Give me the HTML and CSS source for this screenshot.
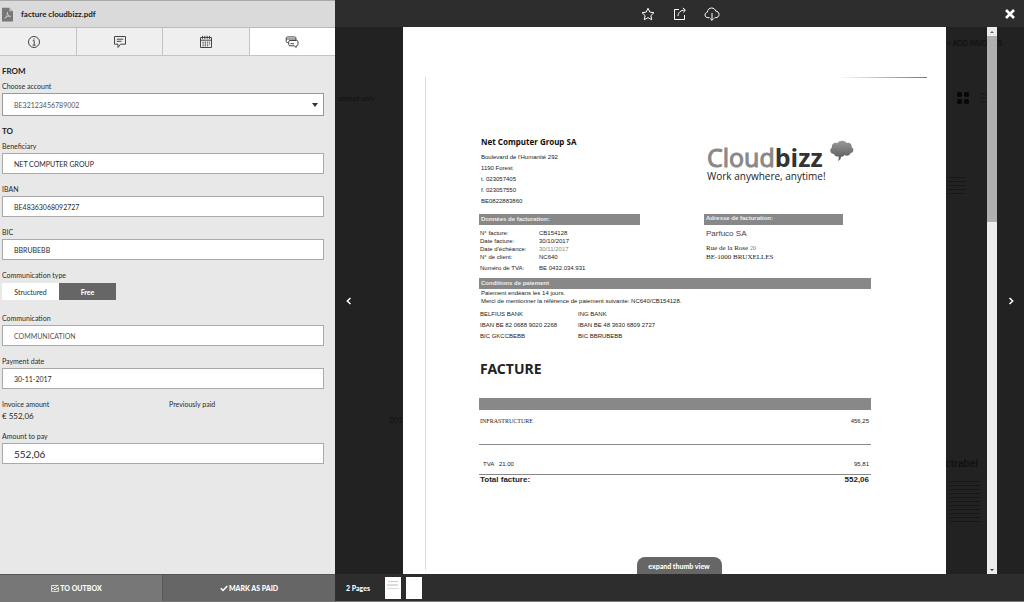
FILE: index.html
```html
<!DOCTYPE html>
<html lang="en">
<head>
<meta charset="utf-8">
<title>facture cloudbizz.pdf</title>
<link rel="stylesheet" href="styles.css">
</head>
<body>
<div class="app">
  <aside class="panel">
    <header class="panel-head">
      <svg class="pdf-icon" viewBox="0 0 12 15" aria-hidden="true"><path fill="#777" d="M0 0h8l4 4v11H0z"/><path fill="#bbb" d="M8 0l4 4H8z"/><path fill="none" stroke="#d8d8d8" stroke-width=".8" d="M3 11.500c2-1 3.200-3.500 3-6.500-.9 2 1.500 5 3.500 4.500C7.500 9 5 9.700 3 11.500z"/></svg>
      <h1>facture cloudbizz.pdf</h1>
    </header>
    <nav class="tabs">
      <button type="button" aria-label="Info"><svg viewBox="0 0 14 14"><circle cx="7" cy="7" r="5.500"/><path d="M5.800 5.700h1.400V10M5.600 10.200h3M7 3.500v1.200"/></svg></button>
      <button type="button" aria-label="Comments"><svg viewBox="0 0 14 14"><path d="M1.500 1.500h11v7.700H7.500L5 12.500V9.200H1.500zM3.800 4.200h6.500M3.800 6.300h4.700"/></svg></button>
      <button type="button" aria-label="Calendar"><svg viewBox="0 0 14 14"><path d="M1.500 2.500h11v10h-11zM1.500 5.200h11M3.500.8v3M5.800.8v3M8.200.8v3M10.500.8v3"/><path stroke-dasharray="1.300 .9" d="M3.500 7.200h7.500M3.500 9h7.500M3.500 10.800h6"/></svg></button>
      <button type="button" class="active" aria-label="Payment"><svg viewBox="0 0 14 14"><path d="M3.500 7.500H2.500c-.8 0-1.300-.5-1.300-1.300V3.200c0-.8.500-1.300 1.300-1.300h7.200c.8 0 1.300.5 1.300 1.300V5M1.200 4H11"/><path d="M5 5.500h6.700c.8 0 1.300.5 1.300 1.300v2.700c0 .8-.5 1.300-1.300 1.300h-.5v1.700l-2-1.700H5c-.8 0-1.300-.5-1.300-1.300V6.800c0-.8.500-1.300 1.300-1.300zM5.500 8.700h3.500"/></svg></button>
    </nav>
    <form class="form" id="payment">
      <section class="group">
        <h2>FROM</h2>
        <div class="field">
          <label for="account">Choose account</label>
          <span class="select">
            <select id="account"><option>BE32123456789002</option></select>
          </span>
        </div>
      </section>
      <section class="group">
        <h2>TO</h2>
        <div class="field"><label for="beneficiary">Beneficiary</label><input id="beneficiary" type="text" value="NET COMPUTER GROUP"></div>
      </section>
      <div class="field"><label for="iban">IBAN</label><input id="iban" type="text" value="BE48363068092727"></div>
      <div class="field"><label for="bic">BIC</label><input id="bic" type="text" value="BBRUBEBB"></div>
      <div class="field">
        <span class="label">Communication type</span>
        <div class="toggle"><button type="button">Structured</button><button type="button" class="on">Free</button></div>
      </div>
      <div class="field"><label for="communication">Communication</label><input id="communication" type="text" placeholder="COMMUNICATION"></div>
      <div class="field"><label for="date">Payment date</label><input id="date" type="text" value="30-11-2017"></div>
      <dl class="amounts">
        <div><dt>Invoice amount</dt><dd>€ 552,06</dd></div>
        <div><dt>Previously paid</dt></div>
      </dl>
      <div class="field"><label for="pay">Amount to pay</label><input id="pay" class="big" type="text" value="552,06"></div>
    </form>
    <footer class="actions">
      <button type="button"><svg viewBox="0 0 8 8"><path fill="none" stroke="#fff" stroke-width=".8" d="M7.400 3v4.400H.6V1.500h6.800M.6 4.500h1.800l.6 1h2l.6-1h1.800M2.600 2.700l1.300 1.200 2.900-2.600"/></svg>TO OUTBOX</button>
      <button type="button"><svg viewBox="0 0 8 8"><path fill="none" stroke="#fff" stroke-width="1.500" d="M.8 4.200l2.200 2.200 4.300-4.500"/></svg>MARK AS PAID</button>
    </footer>
  </aside>

  <main class="viewer">
    <header class="toolbar">
      <button type="button" aria-label="Favourite"><svg viewBox="0 0 16 16"><path d="M8 2.300l1.800 3.800 4.100.6-3 2.900.8 4.100L8 11.700l-3.700 2 .8-4.100-3-2.900 4.100-.6z"/></svg></button>
      <button type="button" aria-label="Share"><svg viewBox="0 0 16 16"><path d="M7 3.500H2.500v10h10V9M6 10c.3-3.500 2.500-5.700 7-6M10.800 2l2.500 1.900-1.800 2.600"/></svg></button>
      <button type="button" aria-label="Download"><svg viewBox="0 0 16 16"><path d="M5.500 11.700H4C2.200 11.700 1 10.400 1 8.900c0-1.400 1-2.400 2.400-2.700C3.400 3.700 5.200 2 7.600 2c2 0 3.600 1.200 4.100 3.100 1.900.1 3.300 1.500 3.300 3.300 0 1.900-1.300 3.300-3.200 3.300h-1.300M8 7v7.300M6.200 12.500L8 14.300l1.800-1.800"/></svg></button>
      <button type="button" class="close" aria-label="Close"><svg viewBox="0 0 12 12"><path stroke-width="2.600" d="M2 2l8 8M10 2l-8 8"/></svg></button>
    </header>

    <div class="stage">
      <div class="backdrop" aria-hidden="true">
        <span class="ghost filter">unread only</span>
        <span class="ghost add">+ ADD INVOICES</span>
        <svg class="ghost-grid" viewBox="0 0 32 12"><path fill="#080808" d="M1 0h3l1 1v3l-1 1H1L0 4V1zM8 0h3l1 1v3l-1 1H8L7 4V1zM1 7h3l1 1v3l-1 1H1l-1-1V8zM8 7h3l1 1v3l-1 1H8l-1-1V8z"/><path stroke="#111" stroke-dasharray="1.500 1" d="M23 2h7M23 6h7M23 10h7"/></svg>
        <span class="ghost year">201</span>
        <span class="ghost brand">ctrabel</span>
        <span class="ghost-lines upper"></span>
        <span class="ghost-lines lower"></span>
      </div>
      <button type="button" class="step" aria-label="Previous"><svg viewBox="0 0 8 8"><path d="M5.500 1L2.300 4l3.200 3"/></svg></button>

      <article class="page">
        <div class="doc-top">
          <section class="sender">
            <h2>Net Computer Group SA</h2>
            <address>Boulevard de l'Humanité 292<br>1190 Forest<br>t. 023057405<br>f. 023057550<br>BE0822883860</address>
            <h3 class="bar">Données de facturation:</h3>
            <table class="facts">
              <tr><th>N° facture:</th><td>CB154128</td></tr>
              <tr><th>Date facture:</th><td>30/10/2017</td></tr>
              <tr><th>Date d'échéance:</th><td class="faint">30/11/2017</td></tr>
              <tr><th>N° de client:</th><td>NC640</td></tr>
              <tr class="tall"><th>Numéro de TVA:</th><td>BE 0432.034.931</td></tr>
            </table>
          </section>
          <section class="recipient">
            <div class="logo">
              <div><p class="logo-name">Cloud<b>bizz</b></p><p class="logo-tag">Work anywhere, anytime!</p></div>
              <svg viewBox="0 0 26 22"><defs><linearGradient id="cloud" x1="0" y1="0" x2="0" y2="1"><stop offset="0" stop-color="#999"/><stop offset="1" stop-color="#555"/></linearGradient></defs><path fill="url(#cloud)" d="M5 14C1 14 0 9 3 7.500 2 4 6 2 8.500 3.200 10 0 16 0 17.500 3c3-1 6 1.500 5 4.300 3 1.200 2.200 5.700-1 5.700-.5 2.700-4 3.500-6 2-.8 1.500-2.500 2-3.500 1.700.2 1.800-1 3.500-3 4.300.8-1.500 1-3 .5-4.500C7.500 16.600 5.500 16 5 14z"/></svg>
            </div>
            <h3 class="bar">Adresse de facturation:</h3>
            <p class="client">Parfuco SA</p>
            <p class="street">Rue de la Rose <small>20</small><br>BE-1000 BRUXELLES</p>
          </section>
        </div>
        <section class="terms">
          <h3 class="bar">Conditions de paiement</h3>
          <p>Paiement endéans les 14 jours.<br>Merci de mentionner la référence de paiement suivante: NC640/CB154128.</p>
          <div class="banks">
            <p>BELFIUS BANK<br>IBAN BE 82 0688 9020 2268<br>BIC GKCCBEBB</p>
            <p>ING BANK<br>IBAN BE 48 3630 6809 2727<br>BIC BBRUBEBB</p>
          </div>
        </section>
        <h2 class="title">FACTURE</h2>
        <table class="lines">
          <thead><tr><td colspan="2"></td></tr></thead>
          <tbody>
            <tr class="item"><th>INFRASTRUCTURE</th><td>456,25</td></tr>
            <tr class="tax"><th>TVA &nbsp; 21.00</th><td>95,81</td></tr>
            <tr class="total"><th>Total facture:</th><td>552,06</td></tr>
          </tbody>
        </table>
        <button type="button" class="expand">expand thumb view</button>
      </article>

      <div class="scrollbar" aria-hidden="true"><i class="up"></i><i class="thumb"></i><i class="down"></i></div>
      <button type="button" class="step" aria-label="Next"><svg viewBox="0 0 8 8"><path d="M2.500 1l3.200 3-3.200 3"/></svg></button>
    </div>

    <footer class="thumbs">
      <span>2 Pages</span>
      <button type="button" class="mini printed" aria-label="Page 1"></button>
      <button type="button" class="mini" aria-label="Page 2"></button>
    </footer>
  </main>
</div>
</body>
</html>
```

FILE: styles.css
```css
* { box-sizing: border-box; margin: 0; padding: 0; }
body { font: 7px/10px Lato, "Open Sans", sans-serif; color: #2a2a2a; background: #222; }
button, input, select { font: inherit; color: inherit; border: 0; border-radius: 0; background: none; }
button { display: flex; align-items: center; justify-content: center; }
h1, h2, h3, th { font-size: inherit; }

.app { display: flex; min-height: 100vh; border-bottom: 1px solid #777; }

/* Payment panel */
.panel { flex: 0 0 335px; display: flex; flex-direction: column; background: #e8e8e8; }
.panel-head { display: flex; align-items: center; gap: 8px; height: 28px; padding: 0 2px; background: #dadada; border-top: 1px solid #aaa; border-bottom: 1px solid #bbb; }
.panel-head h1 { font-size: 8px; color: #222; }
.pdf-icon { width: 11px; height: 15px; }
.tabs { display: grid; grid-template-columns: 76px 1fr 1fr 1fr; height: 28px; border-bottom: 1px solid #c4c4c4; }
.tabs button { background: #efefef; border-left: 1px solid #c4c4c4; }
.tabs button:first-child { border-left: 0; padding-right: 9px; }
.tabs .active { background: #fff; }
.tabs svg { width: 14px; height: 14px; fill: none; stroke: #444; stroke-width: 1; }
.form { flex: 1; display: flex; flex-direction: column; gap: 10px; padding: 10px 11px 10px 2px; }
.group { display: flex; flex-direction: column; gap: 5px; }
.group h2 { font-size: 8px; color: #222; }
.field { display: flex; flex-direction: column; gap: 2px; min-height: 33px; }
.field input { width: 100%; height: 21px; padding: 0 11px; background: #fff; border: 1px solid #aaa; }
.field input::placeholder { color: #555; opacity: 1; }
.field .big { font-size: 10px; }
.select { position: relative; display: block; }
.select select { display: block; width: 100%; height: 23px; padding: 0 11px; appearance: none; background: #fff; border: 1px solid #999; color: #555; }
.select::after { content: ""; position: absolute; right: 6px; top: 10px; border: 3px solid transparent; border-top: 4px solid #333; border-bottom: 0; }
.toggle { display: flex; margin-top: 1px; }
.toggle button { width: 57px; height: 17px; background: #fff; }
.toggle .on { background: #666; color: #fff; font-weight: 900; }
.amounts { display: grid; grid-template-columns: 167px 1fr; }
.amounts dd { margin-top: 2px; font-size: 8px; }
.actions { display: grid; grid-template-columns: 163fr 172fr; height: 27px; }
.actions button { gap: 1px; background: #666; color: #fff; font-weight: 900; border-top: 1px solid #555; }
.actions button:first-child { background: #777; border-right: 1px solid #5a5a5a; padding-right: 9px; }
.actions svg { width: 8px; height: 8px; }

/* Viewer */
.viewer { flex: 1; min-width: 0; display: flex; flex-direction: column; }
.toolbar { position: relative; display: flex; justify-content: center; gap: 16px; height: 27px; background: #2d2d2d; }
.toolbar svg { width: 16px; height: 16px; fill: none; stroke: #fff; stroke-width: 1; }
.toolbar .close { position: absolute; right: 8px; top: 8px; }
.toolbar .close svg { width: 12px; height: 12px; }
.stage { position: relative; flex: 1; display: grid; grid-template-columns: 27px minmax(0, 1fr) 10px 27px; }
.step { z-index: 1; }
.step svg { width: 8px; height: 8px; fill: none; stroke: #fff; stroke-width: 1.500; }
.page { position: relative; margin: 0 41px; padding: 110px 75px 30px 76px; background: #fff; font: 6px/8px "Liberation Sans", sans-serif; color: #222; }
.page::before { content: ""; position: absolute; left: 22px; top: 50px; bottom: 4px; border-left: 1px solid #ddd; }
.page::after { content: ""; position: absolute; right: 19px; top: 50px; width: 90px; height: 1px; background: linear-gradient(to right, #fff, #777); }
.bar { height: 11px; padding-left: 2px; background: #888; color: #eee; font-weight: bold; line-height: 10px; }
.doc-top { display: grid; grid-template-columns: 225px 1fr; }
.sender h2 { padding-left: 2px; font: bold 8px/10px "Noto Sans", sans-serif; color: #111; }
.sender address { margin: 5px 0 7px; padding-left: 2px; font-style: normal; line-height: 11px; }
.sender .bar { width: 161px; }
.facts { margin-top: 4px; border-spacing: 0; }
.facts th { width: 60px; padding-left: 1px; text-align: left; font-weight: normal; }
.facts .faint { color: #888; }
.facts .tall { height: 14px; }
.recipient { font-size: 8px; }
.logo { display: flex; height: 77px; padding: 6px 0 0 3px; gap: 3px; }
.logo svg { width: 26px; height: 22px; margin-top: -3px; }
.logo-name { font: 25px/28px "Open Sans", sans-serif; color: #888; -webkit-text-stroke: 1px #888; }
.logo-name b { color: #333; -webkit-text-stroke: 0; }
.logo-tag { font: 10px/10px "Open Sans", sans-serif; white-space: nowrap; }
.recipient .bar { width: 139px; font-size: 6px; line-height: 8px; }
.client { margin: 5px 0 6px; padding-left: 2px; color: #444; }
.street { padding-left: 2px; font: 7px/9px "Liberation Serif", serif; }
.street small { font-size: 6px; color: #777; }
.terms { margin-top: 3px; }
.terms > p { padding-left: 2px; }
.banks { display: grid; grid-template-columns: 98px 1fr; margin-top: 4px; padding-left: 1px; line-height: 11px; }
.title { margin: 18px 0 20px; padding-left: 1px; font: bold 14px/18px "Noto Sans", sans-serif; }
.lines { width: 100%; border-collapse: collapse; }
.lines thead td { height: 12px; background: #888; }
.lines th { padding-left: 1px; text-align: left; font-weight: normal; }
.lines td { padding-right: 2px; text-align: right; }
.item { height: 34px; vertical-align: top; border-bottom: 1px solid #888; }
.item th, .item td { padding-top: 7px; }
.item th { font-family: "Liberation Serif", serif; }
.tax { height: 30px; vertical-align: bottom; border-bottom: 1px solid #888; }
.tax th { padding-left: 4px; }
.tax th, .tax td { padding-bottom: 6px; }
.total { font-size: 8px; }
.total th, .total td { padding-top: 1px; font-weight: bold; }
.expand { position: absolute; left: 50%; bottom: 0; width: 85px; height: 17px; margin-left: -38px; border-radius: 8px 8px 0 0; background: #666; color: #fff; font: 900 7px/10px Lato, sans-serif; }
.scrollbar { z-index: 1; display: flex; flex-direction: column; background: #ececec; }
.scrollbar .thumb { height: 34%; margin-bottom: auto; background: #b0b0b0; }
.up, .down { height: 9px; display: flex; align-items: center; justify-content: center; }
.up::before, .down::before { content: ""; border: 2px solid transparent; }
.up::before { border-top: 0; border-bottom: 2px solid #666; }
.down::before { border-bottom: 0; border-top: 2px solid #333; }
.thumbs { display: flex; align-items: center; gap: 5px; height: 27px; padding-left: 11px; background: #2d2d2d; color: #fff; font-weight: 900; }
.thumbs span { width: 34px; }
.mini { width: 16px; height: 22px; background: #fff; }
.printed { background: linear-gradient(#ccc, #ccc) 3px 4px / 10px 1px no-repeat, linear-gradient(#ddd, #ddd) 2px 7px / 11px 2px no-repeat, linear-gradient(#ddd, #ddd) 2px 11px / 12px 1px no-repeat, #fff; }

/* Dimmed list behind the viewer */
.backdrop { position: absolute; inset: 0; overflow: hidden; }
.ghost { position: absolute; color: #111; }
.filter { left: 3px; top: 66px; }
.add { right: 22px; top: 11px; font-weight: bold; }
.ghost-grid { position: absolute; right: 35px; top: 65px; width: 32px; height: 12px; }
.year { left: 54px; top: 388px; font-size: 8px; }
.brand { right: 46px; top: 431px; font: bold 10px/12px "Liberation Sans", sans-serif; }
.ghost-lines { position: absolute; background: repeating-linear-gradient(#181818 0 1px, #222 1px 4px); }
.upper { right: 58px; top: 150px; width: 18px; height: 20px; }
.lower { right: 44px; top: 454px; width: 30px; height: 42px; }
```
